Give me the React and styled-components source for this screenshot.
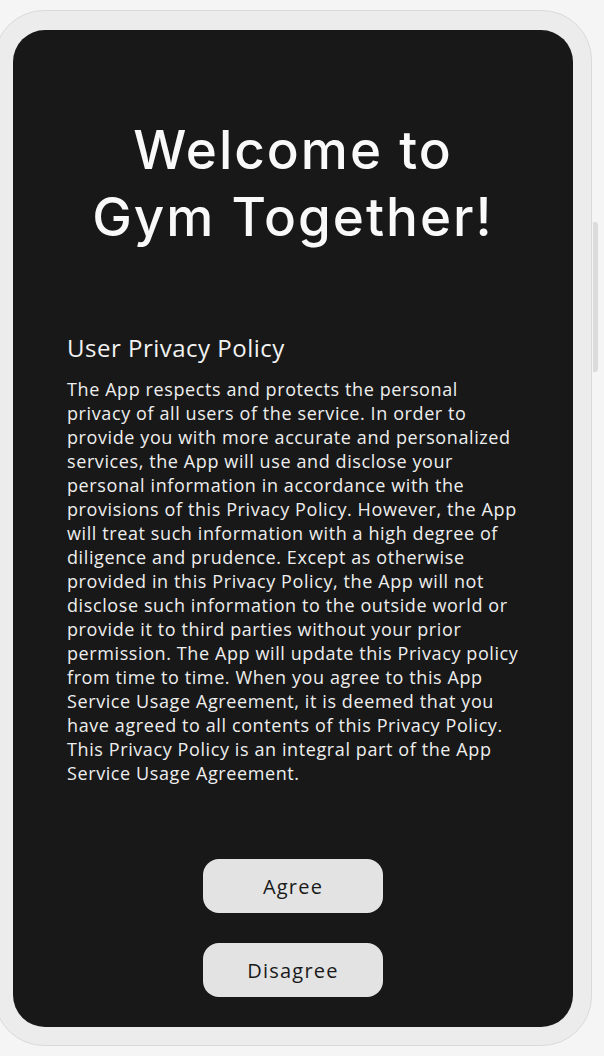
import React from "react";
import styled, { createGlobalStyle } from "styled-components";

const Global = createGlobalStyle`
  html, body {
    margin: 0;
    padding: 0;
    background: #f5f5f5;
    overflow: hidden;
  }
`;

const Frame = styled.div`
  position: relative;
  box-sizing: border-box;
  width: 598px;
  height: 1036px;
  margin: 10px 0 0 -6px;
  padding: 19px 18px 18px 18px;
  background: #ececec;
  border: 1px solid #dadada;
  border-radius: 50px;
`;

const SideButton = styled.div`
  position: absolute;
  top: 211px;
  right: -7px;
  width: 5px;
  height: 150px;
  background: #dcdcdc;
  border-radius: 0 3px 3px 0;
`;

const Screen = styled.div`
  box-sizing: border-box;
  height: 997px;
  background: #181818;
  border-radius: 32px;
  display: flex;
  flex-direction: column;
  padding: 87px 54px 30px 54px;
  font-family: "Open Sans", "Liberation Sans", sans-serif;
`;

const Title = styled.h1`
  margin: 0;
  font-family: Inter, "Open Sans", sans-serif;
  font-size: 53px;
  line-height: 67px;
  font-weight: 500;
  letter-spacing: 2px;
  color: #f9f9f9;
  text-align: center;
`;

const Subtitle = styled.h2`
  margin: 81px 0 0 0;
  font-size: 24px;
  line-height: 32px;
  font-weight: 400;
  letter-spacing: 0.5px;
  color: #f2f2f2;
`;

const Body = styled.p`
  margin: 13px 0 0 0;
  font-size: 18px;
  line-height: 24px;
  letter-spacing: 0.6px;
  color: #eeeeee;
`;

const Actions = styled.div`
  margin-top: auto;
  display: flex;
  flex-direction: column;
  align-items: center;
  gap: 30px;
`;

const Button = styled.button`
  width: 180px;
  height: 54px;
  border: none;
  border-radius: 16px;
  background: #e3e3e3;
  color: #1a1a1a;
  font-family: inherit;
  font-size: 20px;
  letter-spacing: 1.2px;
  cursor: pointer;
`;

const policy =
  "The App respects and protects the personal privacy of all users of the service. In order to provide you with more accurate and personalized services, the App will use and disclose your personal information in accordance with the provisions of this Privacy Policy. However, the App will treat such information with a high degree of diligence and prudence. Except as otherwise provided in this Privacy Policy, the App will not disclose such information to the outside world or provide it to third parties without your prior permission. The App will update this Privacy policy from time to time. When you agree to this App Service Usage Agreement, it is deemed that you have agreed to all contents of this Privacy Policy. This Privacy Policy is an integral part of the App Service Usage Agreement.";

const App = () => (
  <>
    <Global />
    <Frame>
      <SideButton />
      <Screen>
        <Title>
          Welcome to
          <br />
          Gym Together!
        </Title>
        <Subtitle>User Privacy Policy</Subtitle>
        <Body>{policy}</Body>
        <Actions>
          <Button>Agree</Button>
          <Button>Disagree</Button>
        </Actions>
      </Screen>
    </Frame>
  </>
);

export default App;
